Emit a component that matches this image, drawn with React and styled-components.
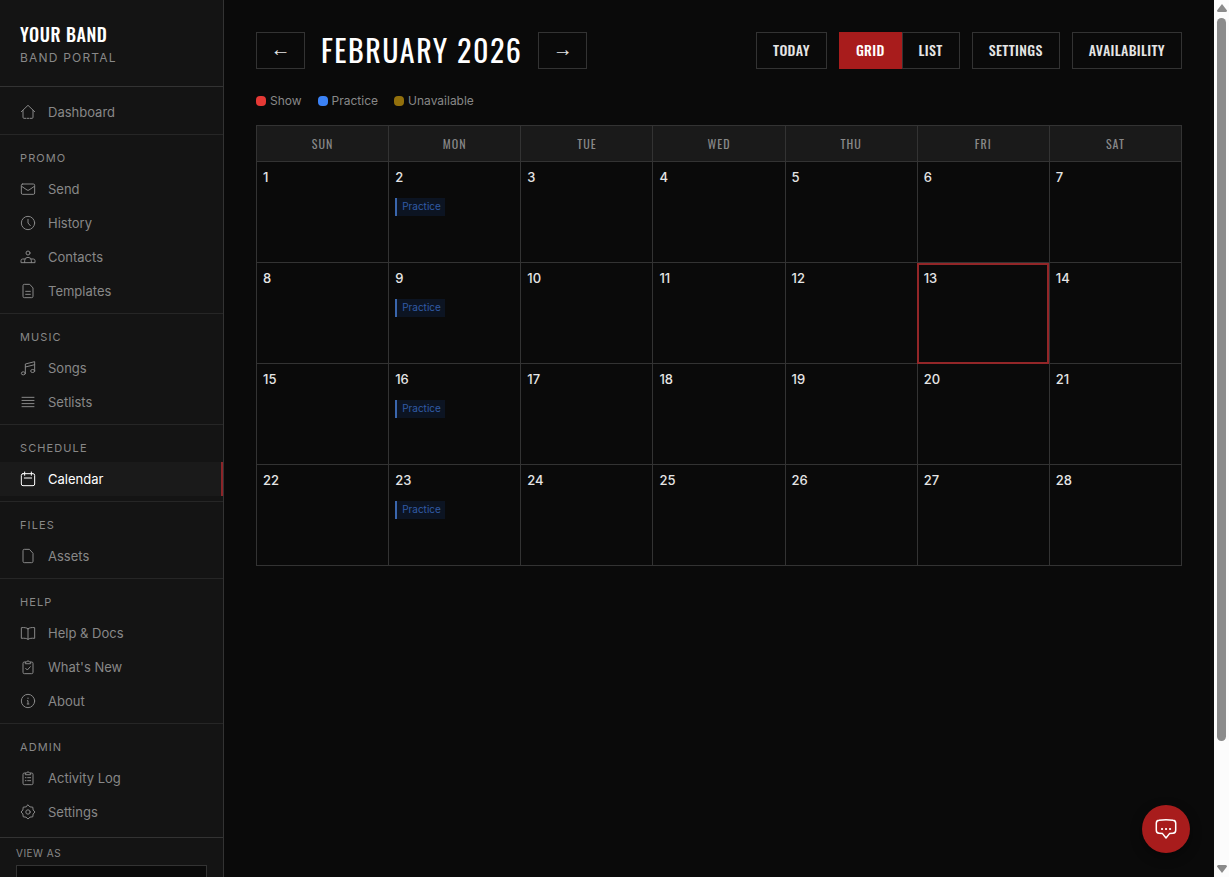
import React from "react";
import styled, { createGlobalStyle } from "styled-components";

const NAV = [
    { title: "Promo", items: ["Send", "History", "Contacts", "Templates"] },
    { title: "Music", items: ["Songs", "Setlists"] },
    { title: "Schedule", items: ["Calendar"] },
    { title: "Files", items: ["Assets"] },
    { title: "Help", items: ["Help & Docs", "What's New", "About"] },
    { title: "Admin", items: ["Activity Log", "Settings"] },
];

const DAYS = ["Sun", "Mon", "Tue", "Wed", "Thu", "Fri", "Sat"];
const WEEKS = [0, 1, 2, 3];
const TODAY = 13;
const PRACTICE_DAYS = [2, 9, 16, 23];

const clipboard = (
    <>
        <path d="M8 4.500H6.500a2 2 0 0 0-2 2V20a2 2 0 0 0 2 2h11a2 2 0 0 0 2-2V6.500a2 2 0 0 0-2-2H16" />
        <path d="M8 6.500V4.500h1.800a2.300 2.300 0 0 1 4.400 0H16v2z" />
    </>
);

const ICONS = {
    Dashboard: (
        <path d="M2 11.500 12 2l10 9.500M4.500 9.500V20a1.500 1.500 0 0 0 1.500 1.500h3M15 21.500h3a1.500 1.500 0 0 0 1.500-1.500V9.500M11 21.500h2" />
    ),
    Send: (
        <>
            <rect x="2" y="4.500" width="20" height="15.500" rx="2" />
            <path d="m2.500 8 8 5.500a2.600 2.600 0 0 0 3 0l8-5.500" />
        </>
    ),
    History: (
        <>
            <circle cx="12" cy="12" r="10" />
            <path d="M12 6.500V12l3.500 4" />
        </>
    ),
    Contacts: (
        <>
            <circle cx="12" cy="6" r="3" />
            <path d="M7 20.500v-3a5 5 0 0 1 10 0v3M7 15H4a2.500 2.500 0 0 0-2.500 2.500v3h21v-3A2.500 2.500 0 0 0 20 15h-3" />
        </>
    ),
    Templates: (
        <>
            <path d="M14 2H6.500a2 2 0 0 0-2 2v16a2 2 0 0 0 2 2h11a2 2 0 0 0 2-2V8z" />
            <path d="M8.500 12.500h7M8.500 17h7" />
        </>
    ),
    Songs: (
        <>
            <path d="M8 20V6l14-3.500V16M8 10.500l14-3.500" />
            <ellipse cx="5" cy="20" rx="3" ry="2.300" />
            <ellipse cx="19" cy="16.500" rx="3" ry="2.300" />
        </>
    ),
    Setlists: <path d="M3 5h18M3 9.700h18M3 14.400h18M3 19h18" />,
    Calendar: (
        <>
            <rect x="2" y="4" width="20" height="18" rx="2.500" />
            <path d="M7 1.500v5M17 1.500v5M6.500 10.500h11" />
        </>
    ),
    Assets: <path d="M13.500 2H6.500a2 2 0 0 0-2 2v16a2 2 0 0 0 2 2h11a2 2 0 0 0 2-2V8.500z" />,
    "Help & Docs": (
        <path d="M12 5.500C10 4 6 3.500 2 4v16c4-.500 8 0 10 1.500 2-1.500 6-2 10-1.500V4c-4-.500-8 0-10 1.500zM12 5.500v16" />
    ),
    "What's New": (
        <>
            {clipboard}
            <path d="m8.500 14 2.500 2.500 4.500-5" />
        </>
    ),
    About: (
        <>
            <circle cx="12" cy="12" r="10" />
            <path d="M11 11.500h1V16M10.800 16.500h2.600M12 7.500v1" />
        </>
    ),
    "Activity Log": (
        <>
            {clipboard}
            <path d="M8 11.500h1M11.500 11.500H16M8 16h1M11.500 16H16" />
        </>
    ),
    Settings: (
        <>
            <path d="m12 1.500 3 2.800 4.200.5.5 4.200L22.500 12l-2.800 3-.5 4.200-4.200.5-3 2.800-3-2.800-4.200-.5-.5-4.200L1.500 12l2.800-3 .5-4.200L9 4.300z" />
            <circle cx="12" cy="12" r="3.300" />
        </>
    ),
};

const NavItem = ({ name }) => (
    <NavLink href="#" $active={name === "Calendar"}>
        <Icon viewBox="0 0 24 24" aria-hidden="true">
            {ICONS[name]}
        </Icon>
        {name}
    </NavLink>
);

const DayCell = ({ day }) => (
    <Cell $today={day === TODAY}>
        <DayNumber>{day}</DayNumber>
        {PRACTICE_DAYS.includes(day) && <Event>Practice</Event>}
    </Cell>
);

const App = () => {
    const [view, setView] = React.useState("grid");

    return (
        <Shell>
            <GlobalStyle />
            <Sidebar>
                <Brand>
                    <BrandName>Your Band</BrandName>
                    <BrandSub>Band Portal</BrandSub>
                </Brand>
                <nav>
                    <HomeSection>
                        <NavItem name="Dashboard" />
                    </HomeSection>
                    {NAV.map(({ title, items }) => (
                        <Section key={title}>
                            <SectionTitle>{title}</SectionTitle>
                            {items.map((name) => (
                                <NavItem key={name} name={name} />
                            ))}
                        </Section>
                    ))}
                </nav>
                <SidebarFooter>
                    <ViewLabel htmlFor="view-as">View as</ViewLabel>
                    <ViewSelect id="view-as">
                        <option>Admin</option>
                    </ViewSelect>
                </SidebarFooter>
            </Sidebar>

            <Main>
                <Toolbar>
                    <MonthNav>
                        <ArrowButton aria-label="Previous month">←</ArrowButton>
                        <Month>February 2026</Month>
                        <ArrowButton aria-label="Next month">→</ArrowButton>
                    </MonthNav>
                    <Actions>
                        <Button>Today</Button>
                        <Toggle>
                            <Button $active={view === "grid"} onClick={() => setView("grid")}>
                                Grid
                            </Button>
                            <Button $active={view === "list"} onClick={() => setView("list")}>
                                List
                            </Button>
                        </Toggle>
                        <Button>Settings</Button>
                        <Button>Availability</Button>
                    </Actions>
                </Toolbar>
                <Legend>
                    <LegendItem $color="#e53935">Show</LegendItem>
                    <LegendItem $color="#3b82f6">Practice</LegendItem>
                    <LegendItem $color="#92700c">Unavailable</LegendItem>
                </Legend>
                <Calendar>
                    <thead>
                        <tr>
                            {DAYS.map((day) => (
                                <HeadCell key={day}>{day}</HeadCell>
                            ))}
                        </tr>
                    </thead>
                    <tbody>
                        {WEEKS.map((week) => (
                            <tr key={week}>
                                {DAYS.map((name, i) => (
                                    <DayCell key={name} day={week * 7 + i + 1} />
                                ))}
                            </tr>
                        ))}
                    </tbody>
                </Calendar>
                <ChatButton aria-label="Send feedback">
                    <svg width="24" height="24" viewBox="0 0 24 24" aria-hidden="true">
                        <path d="M5 3.200q7-1 14 0a3 3 0 0 1 2.700 3v7a3 3 0 0 1-2.700 3l-3.500.4L12 21l-3.500-4.400-3.500-.4a3 3 0 0 1-2.700-3v-7a3 3 0 0 1 2.700-3z" />
                        <path d="M8 12h.1M12 12h.1M16 12h.1" strokeWidth="2.200" />
                    </svg>
                </ChatButton>
            </Main>

            <ScrollTrack aria-hidden="true">
                <ScrollArrow viewBox="0 0 10 8">
                    <path d="M5 0 10 6.500Q10 8 8.500 8h-7Q0 8 0 6.500z" />
                </ScrollArrow>
                <ScrollLane>
                    <ScrollThumb />
                </ScrollLane>
                <ScrollArrow viewBox="0 0 10 8">
                    <path d="M5 8 10 1.500Q10 0 8.500 0h-7Q0 0 0 1.500z" />
                </ScrollArrow>
            </ScrollTrack>
        </Shell>
    );
};

export default App;

const display = `Oswald, "Liberation Sans Narrow", sans-serif`;

const GlobalStyle = createGlobalStyle`
    * {
        box-sizing: border-box;
    }
    body {
        margin: 0;
        background: #0a0a0a;
        color: #fff;
        font-family: Inter, sans-serif;
    }
`;
const Shell = styled.div`
    display: flex;
    height: 100vh;
    overflow: hidden;
`;
const Sidebar = styled.aside`
    flex: 0 0 224px;
    overflow: hidden;
    background: #141414;
    border-right: 1px solid #333;
`;
const Brand = styled.header`
    padding: 20px 20px 19px;
    border-bottom: 1px solid #333;
`;
const BrandName = styled.div`
    font-family: ${display};
    font-size: 18px;
    font-weight: 500;
    line-height: 28px;
    letter-spacing: 0.03em;
    text-transform: uppercase;
`;
const BrandSub = styled.div`
    color: #888;
    font-size: 12px;
    line-height: 19px;
    letter-spacing: 0.1em;
    text-transform: uppercase;
`;
const Section = styled.section`
    padding-bottom: 5px;
    border-bottom: 1px solid #262626;
    &:last-child {
        padding-bottom: 8px;
        border-bottom: none;
    }
`;
const HomeSection = styled.div`
    padding: 8px 0 5px;
    border-bottom: 1px solid #262626;
`;
const SectionTitle = styled.h2`
    margin: 0;
    padding: 16px 20px 6px;
    color: #888;
    font-size: 11px;
    font-weight: 400;
    line-height: 15px;
    letter-spacing: 0.1em;
    text-transform: uppercase;
`;
const NavLink = styled.a`
    display: flex;
    align-items: center;
    gap: 12px;
    height: 34px;
    padding: 0 20px;
    color: ${({ $active }) => ($active ? "#fff" : "#888")};
    background: ${({ $active }) => ($active ? "#1a1a1a" : "transparent")};
    box-shadow: ${({ $active }) => ($active ? "inset -2px 0 #8b2529" : "none")};
    font-size: 13px;
    text-decoration: none;
`;
const Icon = styled.svg`
    width: 16px;
    height: 16px;
    fill: none;
    stroke: currentColor;
    stroke-width: 1.5;
    stroke-linecap: round;
    stroke-linejoin: round;
`;
const SidebarFooter = styled.div`
    padding: 8px 16px;
    border-top: 1px solid #333;
`;
const ViewLabel = styled.label`
    display: block;
    margin-bottom: 4px;
    color: #888;
    font-size: 10px;
    line-height: 15px;
    letter-spacing: 0.05em;
    text-transform: uppercase;
`;
const ViewSelect = styled.select`
    width: 100%;
    height: 36px;
    padding: 0 8px;
    appearance: none;
    color: #fff;
    background: #0a0a0a;
    border: 1px solid #333;
    border-radius: 0;
    font: 12px Inter, sans-serif;
`;
const Main = styled.main`
    position: relative;
    flex: 1;
    min-width: 0;
    padding: 32px;
`;
const Toolbar = styled.div`
    display: flex;
    align-items: center;
    justify-content: space-between;
    height: 37px;
`;
const MonthNav = styled.div`
    display: flex;
    align-items: center;
    gap: 16px;
`;
const Month = styled.h1`
    margin: 0;
    padding-bottom: 2px;
    font-family: ${display};
    font-size: 30px;
    font-weight: 400;
    line-height: 37px;
    letter-spacing: 0.05em;
    text-transform: uppercase;
    white-space: nowrap;
`;
const Actions = styled.div`
    display: flex;
    gap: 12px;
`;
const Button = styled.button`
    height: 37px;
    padding: 0 16px 2px;
    color: ${({ $active }) => ($active ? "#fff" : "#e5e5e5")};
    background: ${({ $active }) => ($active ? "#a81c1c" : "transparent")};
    border: 1px solid ${({ $active }) => ($active ? "#a81c1c" : "#333")};
    font-family: ${display};
    font-size: 14px;
    font-weight: 500;
    letter-spacing: 0.025em;
    text-transform: uppercase;
    cursor: pointer;
`;
const ArrowButton = styled(Button)`
    width: 49px;
    padding: 0 0 2px;
    font-family: "Liberation Sans", sans-serif;
    font-size: 20px;
    font-weight: 400;
    letter-spacing: 0;
`;
const Toggle = styled.div`
    display: flex;
`;
const Legend = styled.div`
    display: flex;
    gap: 16px;
    margin: 22px 0 14px;
`;
const LegendItem = styled.span`
    display: flex;
    align-items: center;
    gap: 4px;
    color: #888;
    font-size: 12px;
    line-height: 20px;
    &::before {
        content: "";
        width: 10px;
        height: 10px;
        border-radius: 4px;
        background: ${({ $color }) => $color};
    }
`;
const Calendar = styled.table`
    width: 100%;
    table-layout: fixed;
    border-collapse: collapse;
`;
const HeadCell = styled.th`
    height: 36px;
    padding: 0;
    color: #888;
    background: #1a1a1a;
    border: 1px solid #333;
    font-family: ${display};
    font-size: 12px;
    font-weight: 400;
    letter-spacing: 1px;
    text-transform: uppercase;
`;
const Cell = styled.td`
    height: 101px;
    padding: 6px;
    vertical-align: top;
    border: 1px solid #333;
    outline: ${({ $today }) => ($today ? "2px solid #932628" : "none")};
    outline-offset: -2px;
`;
const DayNumber = styled.div`
    margin-bottom: 11px;
    color: #e5e5e5;
    font-size: 13px;
    font-weight: 500;
    line-height: 19px;
`;
const Event = styled.span`
    display: inline-block;
    padding: 0 4px 2px 5px;
    color: #315ba5;
    background: #0c1422;
    border-left: 2px solid #3a66ad;
    font-size: 10px;
    line-height: 16px;
    vertical-align: top;
`;
const ChatButton = styled.button`
    position: absolute;
    right: 24px;
    bottom: 24px;
    display: grid;
    place-items: center;
    width: 48px;
    height: 48px;
    padding: 0;
    background: #a81c1c;
    border: none;
    border-radius: 50%;
    box-shadow: 0 4px 12px rgba(0, 0, 0, 0.4);
    cursor: pointer;
    svg {
        fill: none;
        stroke: #fff;
        stroke-width: 1.5;
        stroke-linecap: round;
        stroke-linejoin: round;
    }
`;
const ScrollTrack = styled.div`
    display: flex;
    flex: 0 0 15px;
    flex-direction: column;
    align-items: center;
    gap: 6px;
    padding: 4px 0;
    background: #fcfcfc;
`;
const ScrollArrow = styled.svg`
    width: 10px;
    height: 8px;
    fill: #8b8b8b;
`;
const ScrollLane = styled.div`
    flex: 1;
`;
const ScrollThumb = styled.div`
    width: 9px;
    height: 86%;
    background: #8b8b8b;
    border-radius: 5px;
`;
